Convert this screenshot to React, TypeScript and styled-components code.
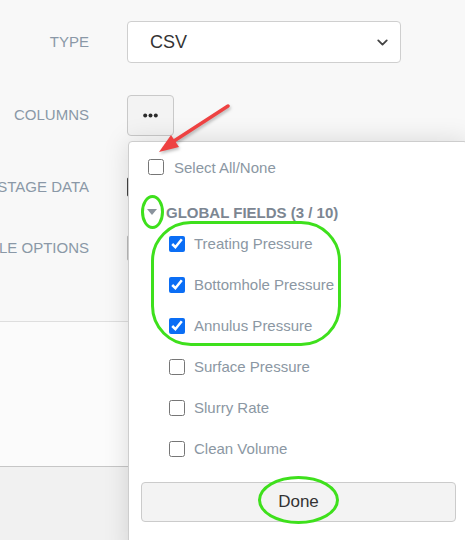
import styled, {createGlobalStyle} from "styled-components"
import {useState} from "react"
import {ChevronDown} from "lucide-react"

const GlobalStyle=createGlobalStyle`
    body{
        margin:0;
        font-family:"Liberation Sans", Arial, sans-serif;
        background:#f9f9f9;
    }
`

type Field={name:string, checked:boolean}

const initialFields:Field[]=[
    {name:"Treating Pressure",checked:true},
    {name:"Bottomhole Pressure",checked:true},
    {name:"Annulus Pressure",checked:true},
    {name:"Surface Pressure",checked:false},
    {name:"Slurry Rate",checked:false},
    {name:"Clean Volume",checked:false},
]

const App=()=>{

    const [fields,setFields]=useState<Field[]>(initialFields);
    const count=fields.filter(f=>f.checked).length;

    const toggle=(i:number)=>{
        setFields(fields.map((f,idx)=>idx===i ? {...f,checked:!f.checked} : f));
    }

    return (
        <Page>
            <GlobalStyle/>
            <FormArea>
                <Row $h={42} $mt={21}>
                    <Label>TYPE</Label>
                    <SelectBox>
                        <span>CSV</span>
                        <ChevronDown size={17} strokeWidth={2.6} color="#444"/>
                    </SelectBox>
                </Row>
                <Row $h={41} $mt={32}>
                    <Label>COLUMNS</Label>
                    <DotsButton>
                        <svg width="15" height="5" viewBox="0 0 15 5">
                            <circle cx="2.2" cy="2.5" r="2" fill="#2b2b2b"/>
                            <circle cx="7.5" cy="2.5" r="2" fill="#2b2b2b"/>
                            <circle cx="12.8" cy="2.5" r="2" fill="#2b2b2b"/>
                        </svg>
                    </DotsButton>
                </Row>
                <Row $h={30} $mt={36}>
                    <Label>STAGE DATA</Label>
                    <HiddenCtrl $border="#444" $h={18}/>
                </Row>
                <Row $h={30} $mt={31}>
                    <Label>FILE OPTIONS</Label>
                    <HiddenCtrl $border="#bbb" $h={24}/>
                </Row>
            </FormArea>
            <MiddleArea/>
            <Footer/>

            <Popup>
                <SelectAllRow>
                    <Check type="checkbox" checked={count===fields.length} onChange={()=>setFields(fields.map(f=>({...f,checked:count!==fields.length})))}/>
                    <ItemText>Select All/None</ItemText>
                </SelectAllRow>
                <GroupHeader>
                    <Caret/>
                    GLOBAL FIELDS ({count} / 10)
                </GroupHeader>
                <ItemList>
                    {fields.map((f,i)=>(
                        <Item key={f.name}>
                            <Check type="checkbox" checked={f.checked} onChange={()=>toggle(i)}/>
                            <ItemText>{f.name}</ItemText>
                        </Item>
                    ))}
                </ItemList>
                <DoneButton>Done</DoneButton>
            </Popup>

            <Arrow width="465" height="540" viewBox="0 0 465 540">
                <g style={{filter:"drop-shadow(1px 2px 1.5px rgba(0,0,0,0.25))"}}>
                    <line x1="228" y1="106" x2="174" y2="141" stroke="#ee4242" strokeWidth="3.5" strokeLinecap="round"/>
                    <polygon points="159,152 171,135 179,147" fill="#ee4242"/>
                </g>
            </Arrow>
            <Circle $l={141} $t={195} $w={23} $h={34} $r="50%"/>
            <Circle $l={151} $t={221} $w={190} $h={125} $r="40px"/>
            <Circle $l={258} $t={476} $w={81} $h={48} $r="50%"/>
        </Page>
    )
}

export default App

const Page=styled.div`
    position: relative;
    width: 465px;
    height: 540px;
    overflow: hidden;
    display: flex;
    flex-direction: column;
    background-color: #f8f8f8;
`

const FormArea=styled.div`
    height: 322px;
    border-bottom: 1px solid #dedede;
    box-sizing: border-box;
    display: flex;
    flex-direction: column;
`

const Row=styled.div<{$h:number,$mt:number}>`
    display: grid;
    grid-template-columns: 89px 1fr;
    column-gap: 38px;
    align-items: center;
    height: ${p=>p.$h}px;
    margin-top: ${p=>p.$mt}px;
`

const Label=styled.div`
    display: flex;
    justify-content: flex-end;
    white-space: nowrap;
    font-size: 15px;
    color: #8a98a7;
    margin-top: -2px;
`

const SelectBox=styled.div`
    width: 274px;
    height: 42px;
    box-sizing: border-box;
    border: 1px solid #cfcfcf;
    border-radius: 4px;
    background-color: white;
    display: flex;
    align-items: center;
    justify-content: space-between;
    padding: 0 9px 0 22px;
    font-size: 18px;
    color: #333;
`

const DotsButton=styled.button`
    width: 47px;
    height: 41px;
    box-sizing: border-box;
    border: 1px solid #c9c9c9;
    border-radius: 4px;
    background-color: #f3f3f3;
    display: flex;
    align-items: center;
    justify-content: center;
    padding: 0;
`

const HiddenCtrl=styled.div<{$border:string,$h:number}>`
    width: 30px;
    height: ${p=>p.$h}px;
    border: 1px solid ${p=>p.$border};
    border-radius: 2px;
    background: white;
`

const MiddleArea=styled.div`
    height: 145px;
    background-color: #fbfbfb;
    border-bottom: 1px solid #c6c6c6;
    box-sizing: border-box;
`

const Footer=styled.div`
    flex: 1;
    background-color: #f1f1f1;
`

const Popup=styled.div`
    position: absolute;
    left: 128px;
    top: 141px;
    width: 340px;
    height: 420px;
    box-sizing: border-box;
    background-color: white;
    border: 1px solid #cdcdcd;
    border-radius: 4px;
    box-shadow: 0 0 26px rgba(0,0,0,0.13);
    padding: 0 11px 0 12px;
    display: flex;
    flex-direction: column;
`

const Check=styled.input`
    width: 16px;
    height: 16px;
    margin: 0;
    accent-color: #0b6ef5;
    flex-shrink: 0;
`

const ItemText=styled.span`
    font-size: 15px;
    color: #8b97a3;
`

const SelectAllRow=styled.label`
    display: flex;
    align-items: center;
    gap: 10px;
    height: 26px;
    margin-top: 12px;
    padding-left: 7px;
`

const GroupHeader=styled.div`
    display: flex;
    align-items: center;
    height: 22px;
    margin-top: 21px;
    padding-left: 6px;
    font-size: 15px;
    font-weight: bold;
    color: #7c8692;
    white-space: nowrap;
`

const Caret=styled.span`
    width: 0;
    height: 0;
    border-left: 5px solid transparent;
    border-right: 5px solid transparent;
    border-top: 6px solid #8a939c;
    margin-right: 9px;
`

const ItemList=styled.div`
    display: flex;
    flex-direction: column;
`

const Item=styled.label`
    display: flex;
    align-items: center;
    gap: 9px;
    height: 41px;
    padding-left: 28px;
`

const DoneButton=styled.button`
    margin-top: 13px;
    height: 40px;
    width: 100%;
    box-sizing: border-box;
    border: 1px solid #cbcbcb;
    border-radius: 4px;
    background-color: #f3f3f3;
    font-family: inherit;
    font-size: 17px;
    color: #333;
`

const Arrow=styled.svg`
    position: absolute;
    left: 0;
    top: 0;
    pointer-events: none;
`

const Circle=styled.div<{$l:number,$t:number,$w:number,$h:number,$r:string}>`
    position: absolute;
    left: ${p=>p.$l}px;
    top: ${p=>p.$t}px;
    width: ${p=>p.$w}px;
    height: ${p=>p.$h}px;
    box-sizing: border-box;
    border: 3px solid #3ee01c;
    border-radius: ${p=>p.$r};
    pointer-events: none;
`
